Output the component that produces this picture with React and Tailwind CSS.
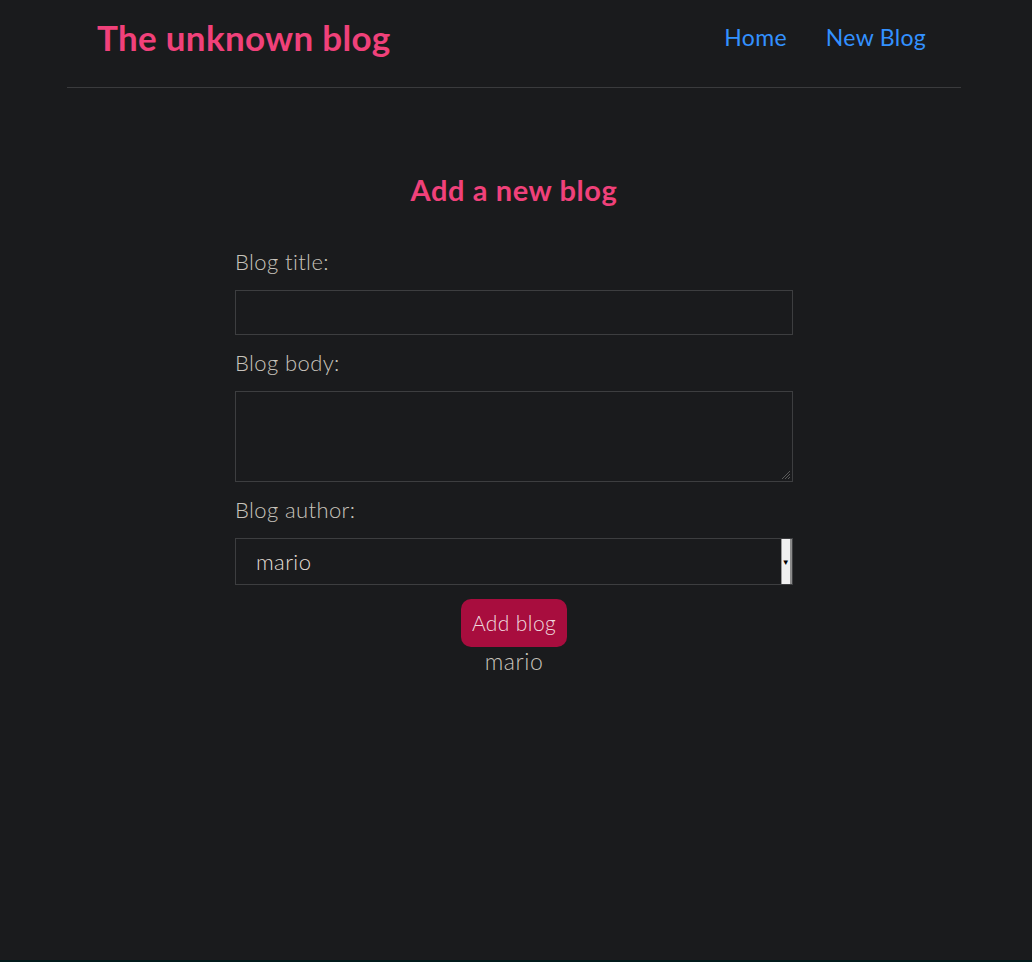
export default function App() {
  const font = { fontFamily: 'Lato, "Open Sans", sans-serif' };
  return (
    <div className="min-h-[962px] h-[962px] bg-[#1a1b1d] flex flex-col" style={font}>
      <div className="flex-1">
        <nav className="ml-[67px] w-[894px] h-[88px] border-b border-[#3a3b3d] flex items-center justify-between pl-[30px] pr-[27px] pb-[13px]">
          <h1 className="text-[35px] font-bold text-[#f0417a] leading-none tracking-[0.3px]">The unknown blog</h1>
          <div className="flex items-center gap-[23px] text-[23px] text-[#3391ff] tracking-[0.3px]">
            <a className="px-[8px]">Home</a>
            <a className="px-[8px]">New Blog</a>
          </div>
        </nav>
        <div className="ml-[67px] w-[894px] flex justify-center pt-[84px]">
          <div className="w-[558px] flex flex-col items-center">
            <h2 className="text-[29px] font-bold text-[#f0417a] leading-[36px] tracking-[0.6px]">Add a new blog</h2>
            <div className="w-full mt-[40px] flex flex-col text-[22px] text-[#c8c3bc] tracking-[0.4px]">
              <label className="leading-[28px] font-light">Blog title:</label>
              <div className="h-[45px] border border-[#3d3e40] mt-[14px]"></div>
              <label className="leading-[28px] mt-[14px] font-light">Blog body:</label>
              <div className="h-[91px] border border-[#3d3e40] mt-[14px] flex items-end justify-end p-[1px]">
                <svg width="12" height="12" viewBox="0 0 12 12">
                  <path d="M11 3 L3 11 M11 6 L6 11 M11 9 L9 11" stroke="#5a5a5a" strokeWidth="1" />
                </svg>
              </div>
              <label className="leading-[28px] mt-[14px] font-light">Blog author:</label>
              <div className="h-[47px] border border-[#3d3e40] mt-[14px] flex items-stretch">
                <span className="flex-1 pl-[20px] flex items-center text-[#e2ddd6] font-light">mario</span>
                <div className="w-[11px] bg-[#f0f0f0] border-l border-[#9a9a9a] border-r-2 border-r-[#8a8a8a] flex items-center justify-center text-[8px] text-black leading-none">▼</div>
              </div>
            </div>
            <button className="mt-[14px] h-[48px] px-[11px] rounded-[10px] bg-[#a80d3e] text-[#efd9df] text-[21px] font-light tracking-[0.4px]">Add blog</button>
            <p className="leading-[28px] text-[23px] text-[#c8c3bc] font-light tracking-[0.6px]">mario</p>
          </div>
        </div>
      </div>
      <div className="h-[2px] bg-[#011a1b]"></div>
    </div>
  );
}
